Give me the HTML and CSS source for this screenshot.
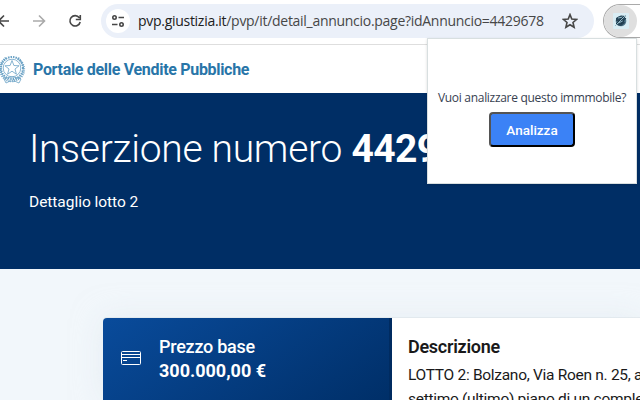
FILE: index.html
```html
<!DOCTYPE html>
<html lang="it">
<head>
<meta charset="utf-8">
<title>Portale delle Vendite Pubbliche</title>
<link rel="stylesheet" href="styles.css">
</head>
<body>
<div class="toolbar">
  <svg class="back" width="10" height="14" viewBox="0 0 10 14"><path d="M9 7H-3M4 1.500L-1.500 7L4 12.500"/></svg>
  <svg class="forward" width="14" height="14" viewBox="0 0 14 14"><path d="M1 7h11M7 1.500L12.500 7L7 12.500"/></svg>
  <svg class="reload" width="14" height="14" viewBox="0 0 14 14"><path d="M11.300 3.700A5.200 5.200 0 1 0 12.200 8M12.300 1v4.500H7.800"/></svg>
  <div class="address">
    <span class="site"><svg width="14" height="14" viewBox="0 0 14 14"><circle cx="3.500" cy="3.500" r="1.700"/><path d="M7.500 3.500H13M1 10.500H6.500"/><circle cx="10.500" cy="10.500" r="1.700"/></svg></span>
    <span class="url"><b>pvp.giustizia.it</b>/pvp/it/detail_annuncio.page?idAnnuncio=4429678</span>
    <svg class="star" width="16" height="16" viewBox="0 0 16 16"><path d="M8 1.600L9.800 6L14.600 6.400L11 9.500L12.100 14.200L8 11.700L3.900 14.200L5 9.500L1.400 6.400L6.200 6Z"/></svg>
  </div>
  <div class="extensions"><span class="ext"><svg width="16" height="16" viewBox="0 0 16 16"><rect width="16" height="16" rx="1" fill="#d9edf4"/><circle cx="8" cy="8" r="5.300" fill="#52778b"/><path d="M3 5L8 2.500L12.500 3L11 8L12 10L8 13L4 12L6 9L3 8Z" fill="#264457"/><path d="M2 13L7 8L13 2M5 5l5-1M5 10l5-2" fill="none" stroke="#93b8c6"/><path d="M3 11L10 4M8 11L13 5" fill="none" stroke="#19394c"/></svg></span></div>
</div>
<header class="brand">
  <svg class="emblem" width="32" height="33" viewBox="0 0 32 33">
    <circle class="cog" cx="18" cy="15" r="11"/><circle cx="18" cy="15" r="8.800"/>
    <path d="M18 7.500L19.900 12.500L25 12.800L21 16L22.400 21.200L18 18.200L13.600 21.200L15 16L11 12.800L16.100 12.500Z"/>
    <path class="leaves" d="M12 5Q2 13 9 24Q13 28 17 28M24 5Q34 15 27 24Q22 28 18 28"/>
    <path d="M10 26Q18 22 27 26L25 30Q18 26 12 30Z"/>
  </svg>
  <span class="portal">Portale delle Vendite Pubbliche</span>
</header>
<section class="hero">
  <h1><span class="lead">Inserzione numero</span> <b>4429678</b></h1>
  <p>Dettaglio lotto 2</p>
</section>
<main>
  <article class="card">
    <div class="price">
      <svg width="20" height="14" viewBox="0 0 20 14"><rect x=".5" y=".5" width="19" height="13" rx="1"/><path d="M1 3.500H19M1 6.500H19M2 9.500H6"/></svg>
      <div><div class="label">Prezzo base</div><div class="amount">300.000,00 €</div></div>
    </div>
    <div class="description">
      <h2>Descrizione</h2>
      <p>LOTTO 2: Bolzano, Via Roen n. 25, a<br>settimo (ultimo) piano di un comple</p>
    </div>
  </article>
</main>
<div class="popup">
  <p>Vuoi analizzare questo immmobile?</p>
  <button>Analizza</button>
</div>
</body>
</html>
```
FILE: styles.css
```css
* { box-sizing: border-box; }
body { margin: 0; width: 640px; height: 400px; overflow: hidden; background: #f2f7fb; font-family: Roboto, "Open Sans", sans-serif; white-space: nowrap; }
svg { flex: none; }
h1, h2, p { margin: 0; font-weight: 400; }
.toolbar { display: flex; align-items: center; height: 45px; padding-bottom: 3px; border-bottom: 1px solid #dedede; background: #fff; }
.toolbar > svg, .star, .site svg { fill: none; stroke: #474747; stroke-width: 1.6; }
.toolbar > .forward { margin-left: 22px; stroke: #aaa; }
.reload { margin-left: 22px; }
.address { display: flex; align-items: center; flex: none; width: 493px; height: 34px; margin-left: 19px; padding: 0 16px 0 5px; border-radius: 17px; background: #ebf0f9; }
.site { display: grid; place-items: center; width: 24px; height: 24px; border-radius: 50%; background: #fff; }
.url { margin-left: 8px; font: 14px "Open Sans", sans-serif; letter-spacing: -.285px; color: #474747; }
.url b { font-weight: 400; color: #202020; }
.star { margin-left: auto; }
.extensions { flex: 1; height: 34px; margin-left: 9px; border: 1px solid #aaa; border-right: 0; border-radius: 17px 0 0 17px; }
.ext { display: grid; place-items: center; width: 33px; height: 32px; border-radius: 50%; background: #dfdfdf; }
.brand { display: flex; align-items: center; height: 48px; background: #fff; }
.emblem { margin-left: -6px; fill: none; stroke: #6ba2c5; stroke-width: .8; }
.cog { stroke-width: 2; stroke-dasharray: 1.5 1; }
.leaves { stroke-width: 2.5; stroke-dasharray: 1 1; }
.portal { margin-left: 7px; font-size: 16px; font-weight: 700; letter-spacing: -.31px; color: #2875a8; }
.hero { height: 176px; padding: 32px 29px; background: #002e65; color: #fff; }
.hero h1 { font-size: 39px; line-height: 48px; letter-spacing: -.28px; }
.hero h1 b { letter-spacing: -.6px; }
.lead { font-weight: 300; }
.hero p { margin-top: 18px; font-size: 15.5px; line-height: 22px; letter-spacing: -.04px; }
main { height: 131px; padding: 49px 0 0 103px; overflow: hidden; }
.card { display: grid; grid-template-columns: 289px 1fr; height: 82px; border-radius: 4px 0 0 0; background: #fff; box-shadow: 0 0 30px #dce5ed88, 0 -1px #e5ebef; }
.price { display: flex; align-items: flex-start; padding: 17px 18px; border-right: 3px solid #002b60; border-radius: 4px 0 0 0; background: linear-gradient(145deg, #094b9b, #002f68 100%); color: #fff; }
.price svg { margin-top: 16px; fill: none; stroke: #fff; }
.price div div { margin-left: 18px; font-size: 18px; line-height: 24px; }
.price .label { font-weight: 500; letter-spacing: -.25px; }
.price .amount { font-weight: 700; }
.description { height: 82px; padding: 17px 0 0 16px; overflow: hidden; color: #19191a; }
.description h2 { font-size: 18px; font-weight: 600; line-height: 24px; letter-spacing: -.27px; }
.description p { margin-top: 4px; font-size: 15.5px; line-height: 24px; letter-spacing: -.29px; }
.popup { position: absolute; left: 427px; top: 38px; width: 210px; height: 146px; padding-top: 49px; border: 1px solid #d8dfe0; background: #fff; box-shadow: 0 1px 3px #0002; text-align: center; }
.popup p { font: 12px/20px "Open Sans", sans-serif; letter-spacing: -.3px; color: #374151; }
.popup button { display: block; width: 86px; height: 35px; margin: 4px 0 0 61px; border: 2px outset #000; border-radius: 4px; padding: 0; background: #3b82f6; color: #fff; font: 500 13.5px Roboto, sans-serif; }
```
